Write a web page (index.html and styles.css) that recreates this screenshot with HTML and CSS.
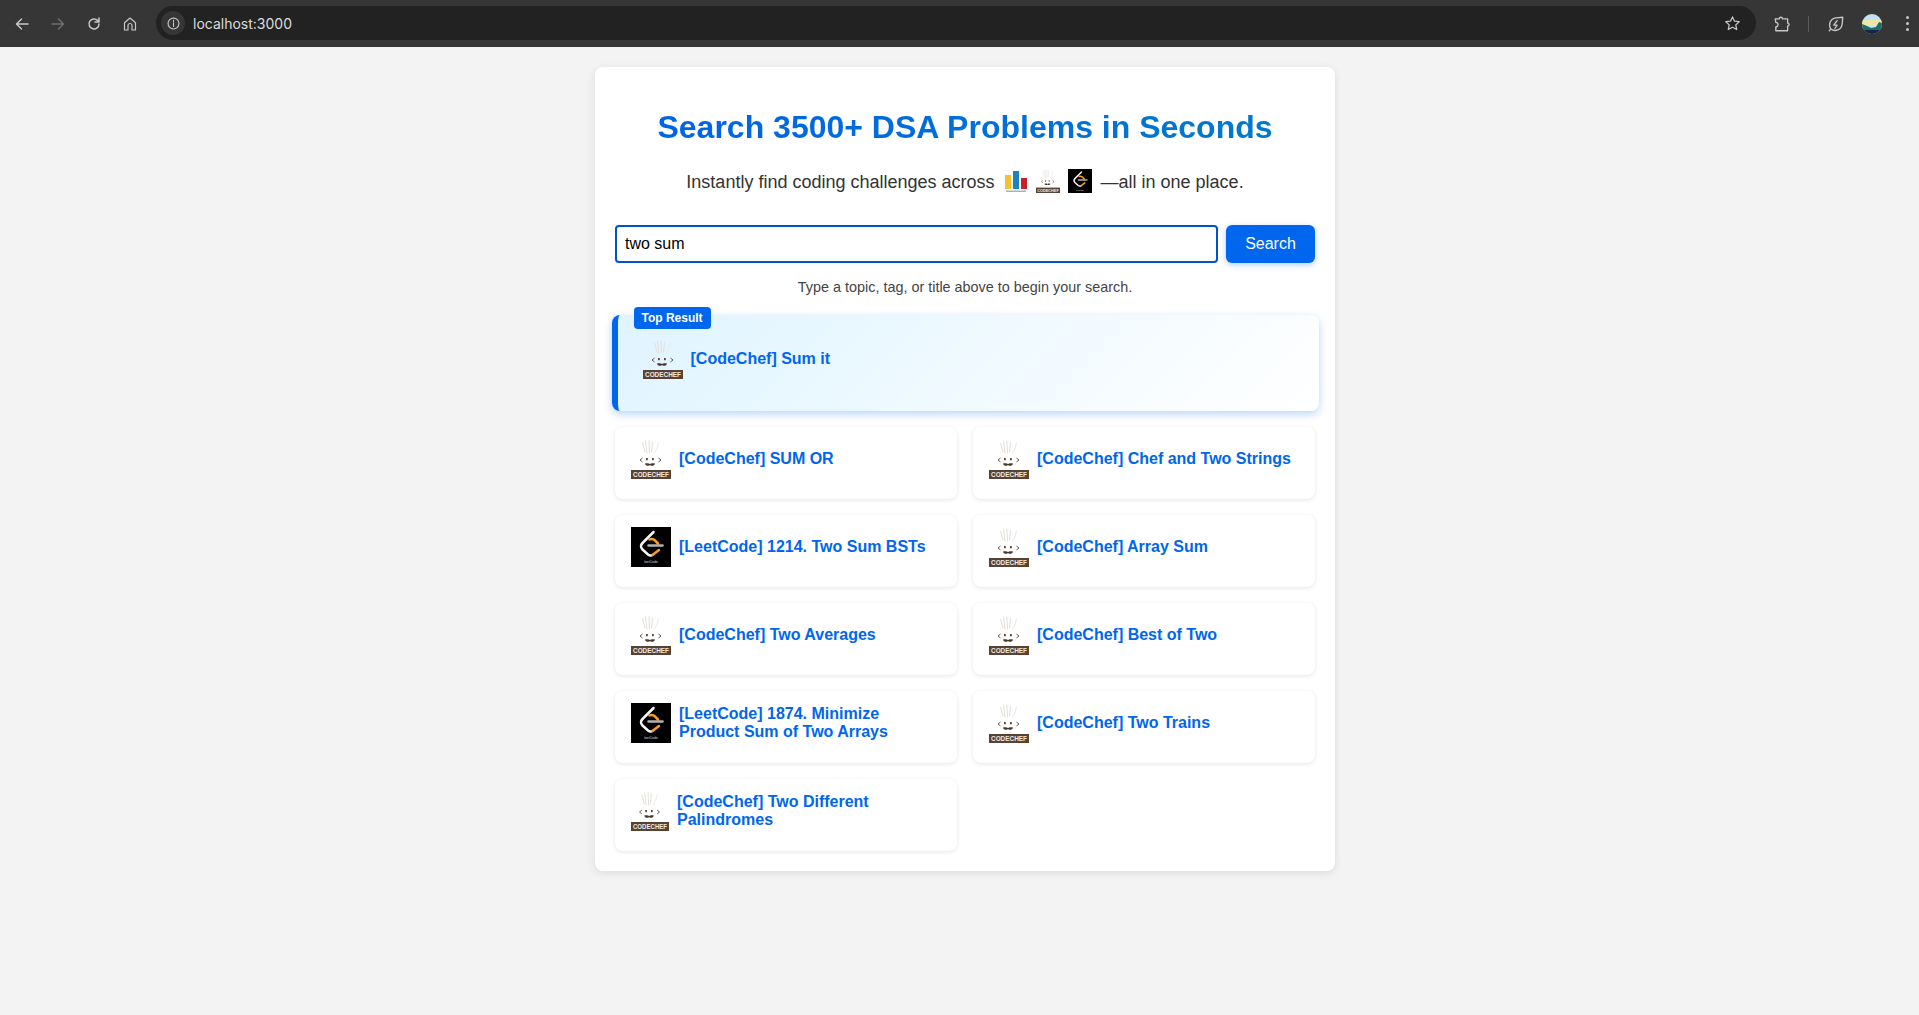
FILE: index.html
```html
<!DOCTYPE html>
<html lang="en">
<head>
<meta charset="utf-8">
<title>localhost:3000</title>
<link rel="stylesheet" href="styles.css">
</head>
<body>
<svg class="defs" width="0" height="0" aria-hidden="true">
  <symbol id="codechef" viewBox="0 0 40 40" overflow="visible">
    <g fill="none" stroke="#e3dfd8" stroke-width="1" stroke-linecap="round">
      <path d="M11.500 4l2.500 9M14.500 2l1.500 12M18 2l.5 12M21.500 3l-1 10"/>
      <path d="M27.500 4c-1 4-2 7-4 10" stroke="#ece9e4"/>
    </g>
    <g fill="none" stroke="#5a4638" stroke-width=".9">
      <path d="M11.500 19l-2.500 2 2.500 2M27.500 19l2.500 2-2.500 2"/>
    </g>
    <rect x="15" y="19" width="1.800" height="2.200" fill="#5a4638"/>
    <rect x="21" y="19" width="1.800" height="2.200" fill="#5a4638"/>
    <path d="M14 24.500c1.500-.5 4-.5 5 .5 1-1 3.500-1 5-.5-.5 2.500-3.500 3-5 1.500-1.500 1.500-4.500 1-5-1.500z" fill="#4a382c"/>
    <rect x="0" y="31" width="40" height="9" fill="#574336"/>
  </symbol>
  <symbol id="leetcode" viewBox="0 0 40 40">
    <rect width="40" height="40" fill="#000"/>
    <path d="M22.500 5 11.500 16c-2 2-2 4.500 0 6.500l5.500 5c1.500 1.200 3 1.300 4.500.5" fill="none" stroke="#f5f5f5" stroke-width="2.500" stroke-linecap="round"/>
    <path d="M18.500 12.500c2-1 3.500-.5 5 .5l3.500 3.500M21.500 28l6.500-5" fill="none" stroke="#f89f1b" stroke-width="2.500" stroke-linecap="round"/>
    <path d="M17.500 18.500h14" stroke="#b3b3b3" stroke-width="2.500" stroke-linecap="round"/>
  </symbol>
  <symbol id="codeforces" viewBox="0 0 24 24">
    <rect x="1" y="6" width="6" height="14" fill="#f6c02f"/>
    <rect x="9" y="2" width="6" height="18" fill="#1e81c4"/>
    <rect x="17" y="9" width="6" height="11" fill="#c5222b"/>
    <rect x="2" y="21.500" width="20" height="1.500" fill="#9fb4cc"/>
  </symbol>
</svg>

<header class="toolbar">
  <svg class="tb-icon" viewBox="0 0 16 16"><path d="M14 8H3M7.500 3 2.500 8l5 5" class="stroke"/></svg>
  <svg class="tb-icon dim" viewBox="0 0 16 16"><path d="M2 8h11M8.500 3l5 5-5 5" class="stroke"/></svg>
  <svg class="tb-icon" viewBox="0 0 16 16"><path d="M13 8a5 5 0 1 1-1.500-3.600L13 6M13 2v4H9" class="stroke"/></svg>
  <svg class="tb-icon" viewBox="0 0 16 16"><path d="M2.500 14V6.800L8 2l5.500 4.800V14h-3.500V9.500a2 2 0 0 0-4 0V14z" class="stroke thin"/></svg>
  <div class="omnibox">
    <span class="info">
      <svg viewBox="0 0 16 16" class="info-icon"><circle cx="8" cy="8" r="5.800" class="stroke thin"/><path d="M8 7.200v4M8 4.600v1.200" class="stroke thin"/></svg>
    </span>
    <span class="url">localhost:3000</span>
    <svg class="star" viewBox="0 0 16 16"><path d="M8 1.800l1.900 4 4.400.5-3.200 3 .9 4.400L8 11.500l-4 2.200.9-4.400-3.200-3 4.400-.5z" class="stroke thin"/></svg>
  </div>
  <svg class="ext" viewBox="0 0 16 16"><path d="M2 3.500h3.500a1.500 1.500 0 0 1 3 0H13v3.700a1.300 1.300 0 0 1 0 2.600V14H2.500V10.500a2 2 0 0 0 0-4z" class="stroke thin"/></svg>
  <span class="divider"></span>
  <svg class="leaf" viewBox="0 0 16 16"><path d="M2 14l1.500-1.500M3.500 12.500C1 9 2.500 3.200 8 2.500l6-.5-.5 6c-.5 5.500-6.500 7-10 4.500zM9 5l-3 4h3l-2 3" class="stroke thin"/></svg>
  <svg class="avatar" viewBox="0 0 20 20">
    <defs><clipPath id="round"><circle cx="10" cy="10" r="10"/></clipPath></defs>
    <g clip-path="url(#round)">
      <rect width="20" height="20" fill="#bfe3f2"/>
      <rect y="6" width="20" height="6" fill="#efe6a8"/>
      <path d="M0 10l5 2 4 2 5-1 3-5 3 1v11H0z" fill="#1f6b66"/>
      <rect y="16" width="20" height="4" fill="#16264a"/>
    </g>
  </svg>
  <span class="dots"><i></i><i></i><i></i></span>
</header>

<div class="page">
<main class="panel">
  <h1 class="title">Search 3500+ DSA Problems in Seconds</h1>
  <p class="lead">
    <span>Instantly find coding challenges across</span>
    <span class="lead-logos">
      <svg class="logo" viewBox="0 0 24 24"><use href="#codeforces"/></svg>
      <svg class="logo" viewBox="0 0 40 40"><use href="#codechef"/><text x="20" y="38" class="chef-label" textLength="36" lengthAdjust="spacingAndGlyphs">CODECHEF</text></svg>
      <svg class="logo" viewBox="0 0 40 40"><use href="#leetcode"/><text x="20" y="36" class="leet-label">leetCode</text></svg>
    </span>
    <span>—all in one place.</span>
  </p>
  <form class="search">
    <input class="search-input" type="text" value="two sum">
    <button class="search-btn" type="button">Search</button>
  </form>
  <p class="hint">Type a topic, tag, or title above to begin your search.</p>

  <a class="top-card">
    <span class="badge">Top Result</span>
    <svg class="icon" viewBox="0 0 40 40"><use href="#codechef"/><text x="20" y="38" class="chef-label" textLength="36" lengthAdjust="spacingAndGlyphs">CODECHEF</text></svg>
    <span class="name">[CodeChef] Sum it</span>
  </a>

  <div class="grid">
    <a class="card"><svg class="icon" viewBox="0 0 40 40"><use href="#codechef"/><text x="20" y="38" class="chef-label" textLength="36" lengthAdjust="spacingAndGlyphs">CODECHEF</text></svg><span class="name">[CodeChef] SUM OR</span></a>
    <a class="card"><svg class="icon" viewBox="0 0 40 40"><use href="#codechef"/><text x="20" y="38" class="chef-label" textLength="36" lengthAdjust="spacingAndGlyphs">CODECHEF</text></svg><span class="name">[CodeChef] Chef and Two Strings</span></a>
    <a class="card"><svg class="icon" viewBox="0 0 40 40"><use href="#leetcode"/><text x="20" y="36" class="leet-label">leetCode</text></svg><span class="name">[LeetCode] 1214. Two Sum BSTs</span></a>
    <a class="card"><svg class="icon" viewBox="0 0 40 40"><use href="#codechef"/><text x="20" y="38" class="chef-label" textLength="36" lengthAdjust="spacingAndGlyphs">CODECHEF</text></svg><span class="name">[CodeChef] Array Sum</span></a>
    <a class="card"><svg class="icon" viewBox="0 0 40 40"><use href="#codechef"/><text x="20" y="38" class="chef-label" textLength="36" lengthAdjust="spacingAndGlyphs">CODECHEF</text></svg><span class="name">[CodeChef] Two Averages</span></a>
    <a class="card"><svg class="icon" viewBox="0 0 40 40"><use href="#codechef"/><text x="20" y="38" class="chef-label" textLength="36" lengthAdjust="spacingAndGlyphs">CODECHEF</text></svg><span class="name">[CodeChef] Best of Two</span></a>
    <a class="card"><svg class="icon" viewBox="0 0 40 40"><use href="#leetcode"/><text x="20" y="36" class="leet-label">leetCode</text></svg><span class="name">[LeetCode] 1874. Minimize Product Sum of Two Arrays</span></a>
    <a class="card"><svg class="icon" viewBox="0 0 40 40"><use href="#codechef"/><text x="20" y="38" class="chef-label" textLength="36" lengthAdjust="spacingAndGlyphs">CODECHEF</text></svg><span class="name">[CodeChef] Two Trains</span></a>
    <a class="card"><svg class="icon narrow" viewBox="0 0 40 40" preserveAspectRatio="none"><use href="#codechef"/><text x="20" y="38" class="chef-label" textLength="36" lengthAdjust="spacingAndGlyphs">CODECHEF</text></svg><span class="name">[CodeChef] Two Different Palindromes</span></a>
  </div>
</main>
</div>
</body>
</html>
```

FILE: styles.css
```css
* { box-sizing: border-box; }
html, body { height: 100%; }
body {
  margin: 0;
  background: #f3f3f3;
  font-family: "Liberation Sans", Arial, sans-serif;
  color: #222;
  overflow: hidden;
}
.defs { display: block; height: 0; }
.chef-label { font: 700 7px "Liberation Sans", sans-serif; fill: #f1eae1; text-anchor: middle; }
.leet-label { font: 3.400px "Liberation Sans", sans-serif; fill: #ddd; text-anchor: middle; }

.toolbar {
  height: 47px;
  background: #363636;
  display: flex;
  align-items: center;
  padding: 0 0 0 14px;
}
.stroke { fill: none; stroke: #c7c7c7; stroke-width: 1.500; stroke-linecap: round; stroke-linejoin: round; }
.stroke.thin { stroke-width: 1.200; }
.tb-icon { width: 16px; height: 16px; margin-right: 20px; flex: none; }
.tb-icon.dim .stroke { stroke: #6f6f6f; }
.omnibox {
  width: 1600px;
  height: 34px;
  margin-left: -2px;
  margin-top: -1px;
  background: #222;
  border-radius: 17px;
  display: flex;
  align-items: center;
  padding: 0 15px 0 5px;
  flex: none;
}
.info {
  width: 24px;
  height: 24px;
  border-radius: 50%;
  background: #363636;
  display: flex;
  align-items: center;
  justify-content: center;
}
.info-icon { width: 15px; height: 15px; }
.url { margin-left: 8px; font: 14px Inter, sans-serif; color: #dcdcdc; flex: 1; }
.star { width: 17px; height: 17px; }
.ext { width: 18px; height: 18px; margin-left: 17px; flex: none; }
.divider { width: 1px; height: 16px; background: #5a5a5a; margin-left: 17px; flex: none; }
.leaf { width: 18px; height: 18px; margin-left: 18px; flex: none; }
.avatar { width: 20px; height: 20px; margin-left: 17px; flex: none; }
.dots { display: flex; flex-direction: column; gap: 3px; margin-left: 24px; flex: none; }
.dots i { width: 3px; height: 3px; border-radius: 50%; background: #c7c7c7; }

.page { padding-left: 11px; }
.panel {
  width: 740px;
  margin: 20px auto 0;
  padding: 42px 20px 20px;
  background: #fff;
  border-radius: 8px;
  box-shadow: 0 2px 8px rgba(0, 0, 0, .1);
}
.title {
  margin: 0;
  font-size: 32px;
  line-height: 37px;
  font-weight: 700;
  text-align: center;
  background: linear-gradient(90deg, #0062ea, #007acc);
  -webkit-background-clip: text;
  background-clip: text;
  color: transparent;
}
.lead {
  margin: 20px 0 0;
  height: 32px;
  display: flex;
  align-items: center;
  justify-content: center;
  font-size: 18px;
  color: #333;
}
.lead-logos { display: flex; gap: 8px; margin: 0 9px; }
.logo { width: 24px; height: 24px; display: block; margin-top: -2px; }
.search { display: flex; gap: 8px; margin-top: 27px; }
.search-input {
  flex: 1;
  min-width: 0;
  height: 38px;
  padding: 0 8px;
  border: 2px solid #0052cc;
  border-radius: 4px;
  font: 16px "Liberation Sans", sans-serif;
  color: #000;
  outline: none;
}
.search-btn {
  width: 89px;
  height: 38px;
  border: 0;
  border-radius: 6px;
  background: #0066ee;
  color: #fff;
  font: 16px "Liberation Sans", sans-serif;
  box-shadow: 0 2px 6px rgba(0, 102, 238, .3);
}
.hint { margin: 16px 0 0; text-align: center; font-size: 14.400px; line-height: 16px; color: #444; }

.name { font-size: 16px; line-height: 18px; font-weight: 700; color: #0066ee; }
.icon { width: 40px; height: 40px; display: block; flex: none; }
.icon.narrow { width: 38px; }

.top-card {
  position: relative;
  display: flex;
  align-items: center;
  gap: 8px;
  width: 707px;
  height: 96px;
  margin: 20px -3.500px 0;
  padding: 0 0 8px 25px;
  border-left: 6px solid #0066ee;
  border-radius: 8px;
  background: linear-gradient(135deg, #dff4ff 0%, #fff 100%);
  box-shadow: 0 3px 8px rgba(0, 102, 238, .28);
}
.badge {
  position: absolute;
  left: 16px;
  top: -8px;
  height: 22px;
  padding: 0 8px;
  border-radius: 4px;
  background: #0066ee;
  color: #fff;
  font-size: 12px;
  font-weight: 700;
  line-height: 22px;
}
.grid {
  display: grid;
  grid-template-columns: 1fr 1fr;
  gap: 16px;
  margin-top: 16px;
}
.card {
  display: flex;
  align-items: center;
  gap: 8px;
  height: 72px;
  padding: 12px 16px 20px;
  background: #fff;
  border-radius: 8px;
  box-shadow: 0 1px 4px rgba(0, 0, 0, .1);
}
```
